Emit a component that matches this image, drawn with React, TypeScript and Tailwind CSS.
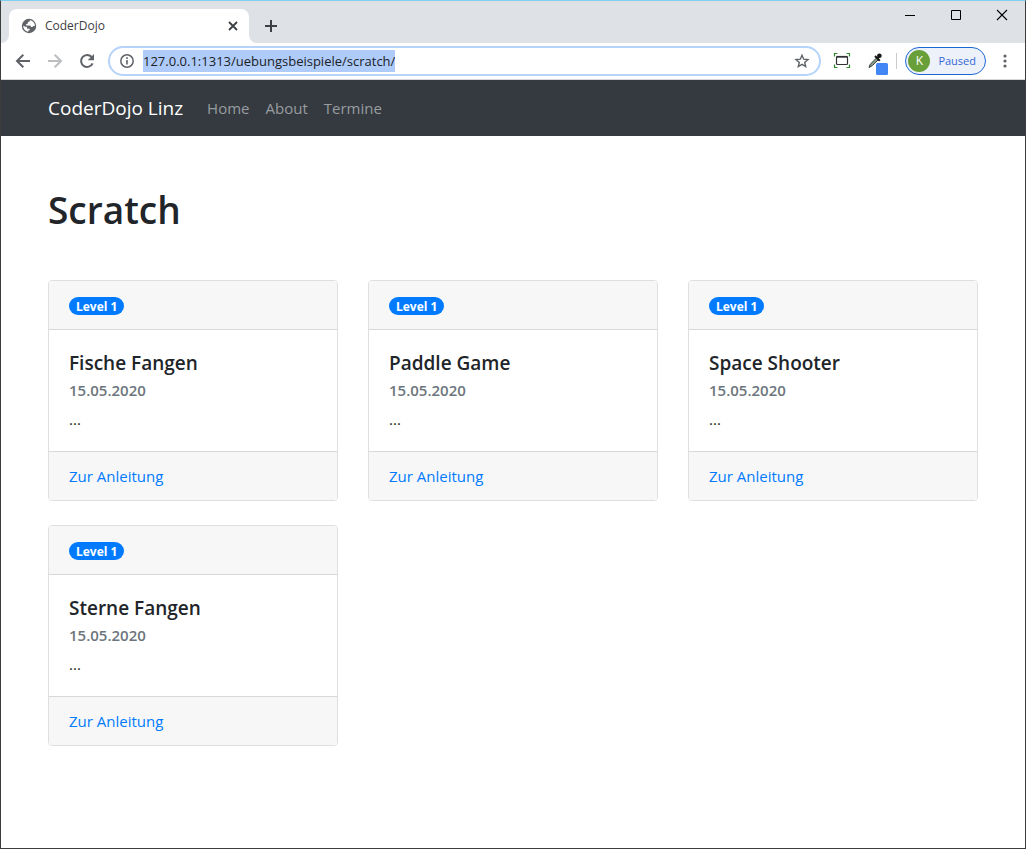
type Exercise = { title: string; date: string; level: string; text: string };

const exercises: Exercise[] = [
  { title: 'Fische Fangen', date: '15.05.2020', level: 'Level 1', text: '...' },
  { title: 'Paddle Game', date: '15.05.2020', level: 'Level 1', text: '...' },
  { title: 'Space Shooter', date: '15.05.2020', level: 'Level 1', text: '...' },
  { title: 'Sterne Fangen', date: '15.05.2020', level: 'Level 1', text: '...' },
];

const navLinks = ['Home', 'About', 'Termine'];

function TabStrip() {
  return (
    <div className="flex h-[42px] items-start justify-between bg-[#dee1e6]">
      <div className="flex items-start pt-2 pl-2">
        <div className="relative flex h-[34px] w-60 items-center rounded-t-lg bg-white pr-2 pl-3">
          <svg className="absolute bottom-0 -left-2 size-2" viewBox="0 0 8 8" aria-hidden="true">
            <path d="M8 0v8H0a8 8 0 0 0 8-8z" fill="#fff" />
          </svg>
          <svg className="absolute -right-2 bottom-0 size-2" viewBox="0 0 8 8" aria-hidden="true">
            <path d="M0 0v8h8a8 8 0 0 1-8-8z" fill="#fff" />
          </svg>
          <svg className="size-4 shrink-0" viewBox="0 0 16 16" aria-hidden="true">
            <circle cx="8" cy="8" r="7.2" fill="#5f6368" />
            <path
              d="M9.600 2.300c-.9.300-1.200.8-1.200 1.500-.8.100-1.600.3-1.700 1.200-.1.900-.7 1.100-1.500 1.100v1.500h3.300c.9 0 1.500.6 1.500 1.500h1.400c.3-.7.8-1 1.500-1h1c.2-2.600-1.500-5-4.300-5.800zM2.200 7.700c0 3 2.100 5.600 5.200 6v-1.500h1.300v-1.400H7.300c-.9 0-1.400-.5-1.400-1.400V8.700H4.300z"
              fill="#fff"
            />
          </svg>
          <span className="ml-2 grow text-xs text-[#3c4043]">CoderDojo</span>
          <button type="button" aria-label="Close tab" className="flex size-4 items-center justify-center">
            <svg className="size-4" viewBox="0 0 16 16" fill="none" stroke="#3c4043" strokeWidth="1.800" aria-hidden="true">
              <path d="M4 4l8 8M12 4l-8 8" />
            </svg>
          </button>
        </div>
        <button type="button" aria-label="New tab" className="ml-3 flex h-[34px] w-5 items-center justify-center">
          <svg className="size-5" viewBox="0 0 20 20" fill="none" stroke="#3c4043" strokeWidth="2" aria-hidden="true">
            <path d="M10 4v12M4 10h12" />
          </svg>
        </button>
      </div>
      <div className="flex">
        <button type="button" aria-label="Minimize" className="flex h-7 w-[46px] items-center justify-center">
          <svg className="size-3" viewBox="0 0 12 12" stroke="#000" aria-hidden="true">
            <path d="M1 6.500h10" />
          </svg>
        </button>
        <button type="button" aria-label="Maximize" className="flex h-7 w-[46px] items-center justify-center">
          <svg className="size-3" viewBox="0 0 12 12" fill="none" stroke="#000" aria-hidden="true">
            <path d="M1.500 1.500h9v9h-9z" />
          </svg>
        </button>
        <button type="button" aria-label="Close window" className="flex h-7 w-[46px] items-center justify-center">
          <svg className="size-3" viewBox="0 0 12 12" fill="none" stroke="#000" strokeWidth="1.100" aria-hidden="true">
            <path d="M1 1l10 10M11 1L1 11" />
          </svg>
        </button>
      </div>
    </div>
  );
}

function Toolbar() {
  return (
    <div className="flex h-[37px] items-center border-b border-[#d5d7da] bg-white px-3">
      <div className="flex items-center gap-3">
        <button type="button" aria-label="Back" className="size-5">
          <svg className="size-5" viewBox="0 0 20 20" fill="none" stroke="#5f6368" strokeWidth="2" aria-hidden="true">
            <path d="M17 10H4M10.300 3.700L4 10l6.300 6.300" />
          </svg>
        </button>
        <button type="button" aria-label="Forward" className="size-5">
          <svg className="size-5" viewBox="0 0 20 20" fill="none" stroke="#bbbdbf" strokeWidth="2" aria-hidden="true">
            <path d="M3 10h13M9.700 3.700L16 10l-6.300 6.300" />
          </svg>
        </button>
        <button type="button" aria-label="Reload" className="size-5">
          <svg className="size-5" viewBox="0 0 20 20" fill="none" aria-hidden="true">
            <path d="M15.600 12.300A6 6 0 1 1 14.600 6" stroke="#5f6368" strokeWidth="2" />
            <path d="M17 3v6.300h-6.300z" fill="#5f6368" />
          </svg>
        </button>
      </div>
      <div className="ml-[11px] flex h-[30px] min-w-0 grow items-center rounded-full border-2 border-[#b5d3fb] bg-white px-[9px]">
        <svg className="size-4 shrink-0" viewBox="0 0 16 16" aria-hidden="true">
          <circle cx="8" cy="8" r="6.200" fill="none" stroke="#5f6368" strokeWidth="1.500" />
          <path d="M7.200 7h1.600v4.500H7.200zM7.200 4.300h1.600v1.600H7.200z" fill="#5f6368" />
        </svg>
        <div className="flex min-w-0 grow pl-2">
          <input
            type="text"
            readOnly
            aria-label="Address"
            value="127.0.0.1:1313/uebungsbeispiele/scratch/"
            className="field-sizing-content h-[22px] max-w-full bg-[#aecbfa] text-[13px] text-[#202124] outline-none"
          />
        </div>
        <button type="button" aria-label="Bookmark" className="size-4 shrink-0">
          <svg className="size-4" viewBox="0 0 16 16" fill="none" stroke="#5f6368" strokeWidth="1.400" aria-hidden="true">
            <path d="M8 2.200l1.700 4 4.300.4-3.300 2.800 1 4.200L8 11.400l-3.700 2.200 1-4.200L2 6.600l4.300-.4z" />
          </svg>
        </button>
      </div>
      <div className="ml-[11px] flex shrink-0 items-center">
        <button type="button" aria-label="Capture window" className="size-5">
          <svg className="size-5" viewBox="0 0 20 20" fill="none" aria-hidden="true">
            <rect x="4.500" y="5.500" width="11" height="8" rx="1" stroke="#2f3134" strokeWidth="1.200" />
            <path d="M4.500 5.800h11" stroke="#2f3134" strokeWidth="1.800" />
            <path d="M2.500 5.500v-3H5.500M14.500 2.500h3v3M17.500 13.500v3h-3M5.500 16.500h-3v-3" stroke="#2f8a2f" strokeWidth="1.200" />
          </svg>
        </button>
        <button type="button" aria-label="Color picker" className="ml-4 h-7 w-5">
          <svg className="h-7 w-5" viewBox="0 0 20 28" fill="none" aria-hidden="true">
            <path d="M1 20.500l1.200-3.200 6.300-6.300 1.700 1.700-6 6z" fill="#8aa393" stroke="#303a33" strokeWidth="1" />
            <path d="M7 9l4.800 4.800M9.300 11.300l3-3.300" stroke="#171717" strokeWidth="2" />
            <circle cx="11.400" cy="8.800" r="2.300" fill="#171717" />
            <rect x="8" y="16" width="12" height="12" rx="1.500" fill="#4285f4" />
          </svg>
        </button>
        <div className="ml-2 h-4 w-px bg-[#c8cacd]" />
        <button
          type="button"
          className="ml-2 flex h-7 items-center rounded-full border border-[#1967d2] bg-[#edf2fa] pr-[9px] pl-0.5 text-[11px] text-[#3367d6]"
        >
          <span className="mr-2 flex size-[22px] items-center justify-center rounded-full bg-[#689f38] text-xs text-white">K</span>
          Paused
        </button>
        <button type="button" aria-label="Menu" className="ml-[11px] flex h-5 w-4 items-center justify-center">
          <svg className="h-4 w-1" viewBox="0 0 4 16" fill="#5f6368" aria-hidden="true">
            <circle cx="2" cy="3" r="1.600" />
            <circle cx="2" cy="8" r="1.600" />
            <circle cx="2" cy="13" r="1.600" />
          </svg>
        </button>
      </div>
    </div>
  );
}

function ExerciseCard({ title, date, level, text }: Exercise) {
  return (
    <article className="overflow-hidden rounded border border-[#dfdfdf] bg-white">
      <div className="flex h-[49px] items-center border-b border-[#d8d8d8] bg-[#f7f7f7] px-5 pt-0.5">
        <span className="flex h-[18px] items-center rounded-full bg-[#007bff] px-[7px] pt-px text-xs font-bold text-white">{level}</span>
      </div>
      <div className="p-5">
        <h2 className="text-[19px] leading-[26px] font-semibold">{title}</h2>
        <p className="mt-1 text-[15px] leading-5 font-semibold text-[#6c757d]">{date}</p>
        <p className="mt-[7px] text-[15px] leading-6">{text}</p>
      </div>
      <div className="flex h-[49px] items-center border-t border-[#d8d8d8] bg-[#f7f7f7] px-5">
        <a href="#" className="text-[15px] leading-6 text-[#007bff]">
          Zur Anleitung
        </a>
      </div>
    </article>
  );
}

export default function App() {
  return (
    <div className="flex min-h-screen flex-col border border-[#3c3c3c] border-t-[#7fd0f0] bg-white font-['Open_Sans','Noto_Sans',sans-serif] text-[#212529]">
      <TabStrip />
      <Toolbar />
      <nav className="flex h-14 items-center bg-[#343a40] px-[47px]">
        <a href="#" className="mr-6 text-[19px] leading-7 text-white">
          CoderDojo Linz
        </a>
        <div className="flex gap-4">
          {navLinks.map((label) => (
            <a key={label} href="#" className="text-[15px] leading-6 text-[#999c9f]">
              {label}
            </a>
          ))}
        </div>
      </nav>
      <main className="grow px-[47px] pt-12">
        <h1 className="text-[37px] leading-[52px] font-semibold">Scratch</h1>
        <section className="mt-11 grid grid-cols-1 gap-x-[30px] gap-y-6 sm:grid-cols-2 md:grid-cols-3">
          {exercises.map((exercise) => (
            <ExerciseCard key={exercise.title} {...exercise} />
          ))}
        </section>
      </main>
    </div>
  );
}
